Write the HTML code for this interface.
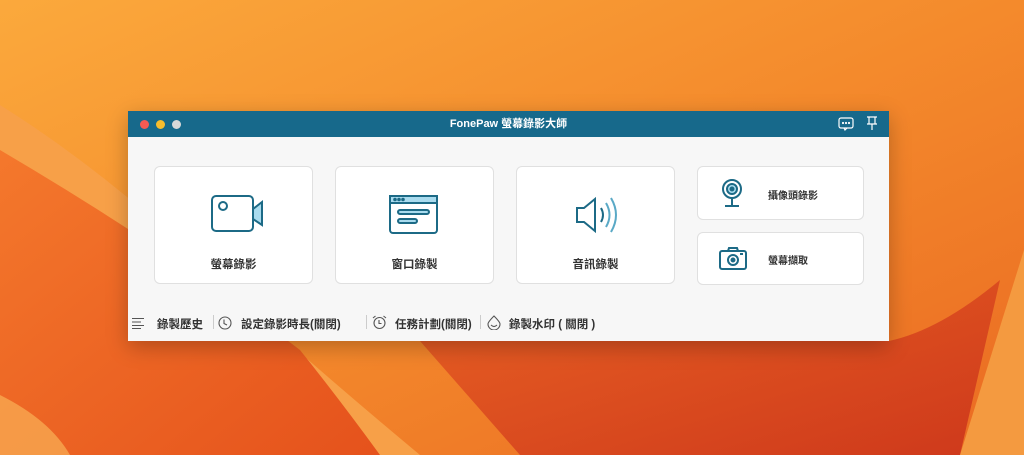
<!DOCTYPE html>
<html><head><meta charset="utf-8"><style>
*{margin:0;padding:0;box-sizing:border-box}
body{width:1024px;height:455px;overflow:hidden;position:relative;font-family:"Liberation Sans","Noto Sans CJK TC",sans-serif;background:#f08a2a}
.bg{position:absolute;inset:0}
.win{position:absolute;left:128px;top:111px;width:761px;height:230px;background:#f7f7f7;box-shadow:0 6px 20px rgba(0,0,0,.25)}
.tb{height:26px;background:#17698b;position:relative;color:#fff;font-size:11px;font-weight:bold;text-align:center;line-height:26px}
.dot{position:absolute;top:9px;width:9px;height:9px;border-radius:50%}
.card{position:absolute;background:#fff;border:1.5px solid #e0e0e0;border-radius:6px}
.lbl{position:absolute;width:100%;text-align:center;font-size:11.5px;color:#333;font-weight:bold}
.sl{position:absolute;left:70px;font-size:10px;color:#333;font-weight:bold}
.bot{position:absolute;top:205px;font-size:11.5px;color:#333;font-weight:bold}
.sep{position:absolute;top:204px;width:1px;height:14px;background:#ccc}
</style></head><body>
<svg class="bg" width="1024" height="455" viewBox="0 0 1024 455">
<defs>
<linearGradient id="g1" x1="0" y1="0" x2="1" y2="1"><stop offset="0" stop-color="#fba93c"/><stop offset=".5" stop-color="#f48a2c"/><stop offset="1" stop-color="#ea6a22"/></linearGradient>
<linearGradient id="g2" x1="0" y1="0" x2="1" y2="1"><stop offset="0" stop-color="#f4782c"/><stop offset="1" stop-color="#e5521c"/></linearGradient>
<linearGradient id="g3" x1="0" y1="0" x2="1" y2="1"><stop offset="0" stop-color="#e65a22"/><stop offset="1" stop-color="#c9301a"/></linearGradient>
</defs>
<rect width="1024" height="455" fill="url(#g1)"/>
<path d="M0 105 Q120 180 240 300 Q330 380 420 455 L0 455 Z" fill="#f7a048"/>
<path d="M0 150 Q170 250 300 350 Q340 400 380 455 L0 455 Z" fill="url(#g2)"/>
<path d="M0 395 Q50 420 70 455 L0 455Z" fill="#f8a850" opacity=".8"/>
<path d="M420 341 L889 341 Q940 330 1000 280 L960 455 L520 455 Z" fill="url(#g3)" opacity=".85"/>
<path d="M1024 250 L960 455 L1024 455Z" fill="#f49a40"/>
</svg>
<div class="win">
<div class="tb"><span class="dot" style="left:12px;background:#f45a52"></span><span class="dot" style="left:28px;background:#f7bd2d"></span><span class="dot" style="left:44px;background:#d8d8d8"></span>FonePaw 螢幕錄影大師
<svg style="position:absolute;left:710px;top:6px" width="16" height="14" viewBox="0 0 16 14" fill="none" stroke="#fff" stroke-width="1.2"><rect x="1" y="1" width="14" height="10" rx="2"/><path d="M6 11 L7 13 L9 11"/><circle cx="5" cy="6" r=".5"/><circle cx="8" cy="6" r=".5"/><circle cx="11" cy="6" r=".5"/></svg>
<svg style="position:absolute;left:738px;top:5px" width="12" height="15" viewBox="0 0 12 15" fill="none" stroke="#fff" stroke-width="1.2"><path d="M1 1H11M3 1V8M9 1V8M1 8H11M6 8V14"/></svg>
</div>
<div class="card" style="left:26px;top:55px;width:159px;height:118px">
<svg style="position:absolute;left:56px;top:28px" width="54" height="38" viewBox="0 0 54 38" fill="none" stroke="#1c6a86" stroke-width="2"><rect x="1" y="1" width="41" height="35" rx="4" fill="#fff"/><circle cx="12" cy="11" r="4"/><path d="M42 14 L51 7 V30 L42 24Z" fill="#a9dbee"/></svg>
<div class="lbl" style="top:89px">螢幕錄影</div></div>
<div class="card" style="left:207px;top:55px;width:159px;height:118px">
<svg style="position:absolute;left:53px;top:28px" width="50" height="40" viewBox="0 0 50 40" fill="none" stroke="#1c6a86" stroke-width="2"><rect x="1" y="1" width="47" height="37" rx="3"/><rect x="1" y="1" width="47" height="7" fill="#a9dbee"/><circle cx="6" cy="4.5" r=".8" fill="#1c6a86"/><circle cx="10" cy="4.5" r=".8" fill="#1c6a86"/><circle cx="14" cy="4.5" r=".8" fill="#1c6a86"/><rect x="9" y="15" width="31" height="4" rx="2" fill="#a9dbee"/><rect x="9" y="24" width="19" height="4" rx="2" fill="#a9dbee"/></svg>
<div class="lbl" style="top:89px">窗口錄製</div></div>
<div class="card" style="left:388px;top:55px;width:159px;height:118px">
<svg style="position:absolute;left:58px;top:28px" width="50" height="40" viewBox="0 0 50 40" fill="none" stroke="#1c6a86" stroke-width="2"><path d="M2 13 H9 L20 4 V36 L9 27 H2Z"/><path d="M26 13 Q30 20 26 27"/><path d="M31 8 Q38 20 31 32" stroke="#5aa9c6"/><path d="M36 3 Q46 20 36 37" stroke="#5aa9c6"/></svg>
<div class="lbl" style="top:89px">音訊錄製</div></div>
<div class="card" style="left:569px;top:55px;width:167px;height:54px">
<svg style="position:absolute;left:23px;top:12px" width="22" height="30" viewBox="0 0 22 30" fill="none" stroke="#1c6a86" stroke-width="2"><circle cx="11" cy="10" r="9"/><circle cx="11" cy="10" r="5" fill="#a9dbee"/><circle cx="11" cy="10" r="1.5" fill="#1c6a86"/><path d="M11 19 V26 M4 27 H18"/></svg>
<div class="sl" style="top:20px">攝像頭錄影</div></div>
<div class="card" style="left:569px;top:121px;width:167px;height:53px">
<svg style="position:absolute;left:21px;top:14px" width="28" height="24" viewBox="0 0 28 24" fill="none" stroke="#1c6a86" stroke-width="2"><rect x="1" y="4" width="26" height="18" rx="2"/><path d="M9 4 L10 1 H18 L19 4"/><circle cx="14" cy="13" r="5"/><circle cx="14" cy="13" r="1.5" fill="#1c6a86"/><path d="M21 7 H24"/></svg>
<div class="sl" style="top:19px">螢幕擷取</div></div>
<svg style="position:absolute;left:4px;top:206px" width="12" height="12" viewBox="0 0 12 12" stroke="#555" stroke-width="1"><path d="M0 1.5H12M0 5H9M0 8.5H12M0 11.5H9"/></svg>
<div class="bot" style="left:29px">錄製歷史</div>
<div class="sep" style="left:85px"></div>
<svg style="position:absolute;left:90px;top:205px" width="14" height="14" viewBox="0 0 14 14" fill="none" stroke="#555" stroke-width="1.1"><circle cx="7" cy="7" r="6"/><path d="M6 3.5 V7.5 L9 9"/></svg>
<div class="bot" style="left:113px">設定錄影時長(關閉)</div>
<div class="sep" style="left:238px"></div>
<svg style="position:absolute;left:244px;top:204px" width="15" height="15" viewBox="0 0 15 15" fill="none" stroke="#555" stroke-width="1.1"><circle cx="7.5" cy="8" r="5.5"/><path d="M7 5 V8.5 H9.5 M1 3 L3.5 1 M14 3 L11.5 1"/></svg>
<div class="bot" style="left:267px">任務計劃(關閉)</div>
<div class="sep" style="left:352px"></div>
<svg style="position:absolute;left:359px;top:204px" width="14" height="15" viewBox="0 0 14 15" fill="none" stroke="#555" stroke-width="1.1"><path d="M7 1 Q13 7 13 9 A6 6 0 0 1 1 9 Q1 7 7 1Z"/><path d="M4 10 Q7 13 10 10"/></svg>
<div class="bot" style="left:381px">錄製水印 ( 關閉 )</div>
</div>
</body></html>
